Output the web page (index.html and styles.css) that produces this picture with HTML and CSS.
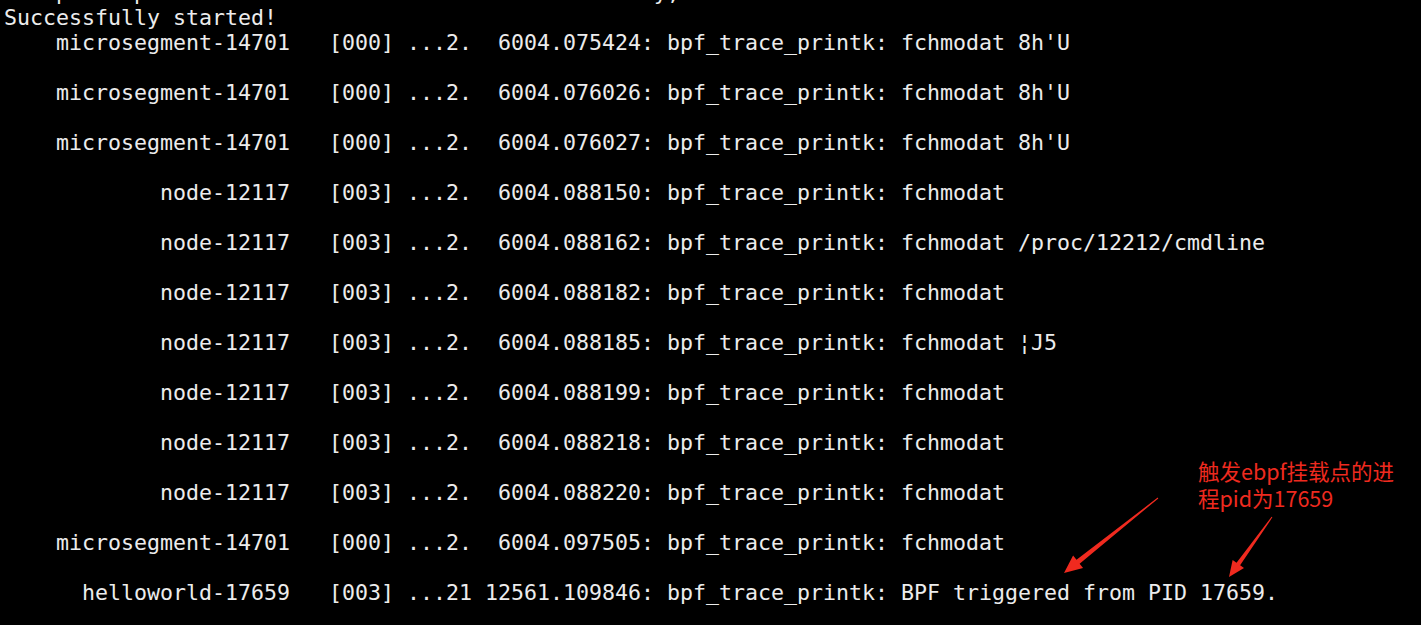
FILE: index.html
```html
<!DOCTYPE html>
<html lang="zh-CN">
<head>
<meta charset="utf-8">
<title>trace_pipe</title>
<link rel="stylesheet" href="styles.css">
</head>
<body>
<div class="screen">
<pre class="term">    path: printk: attach to tracefs then read it by,
Successfully started!
    microsegment-14701   [000] ...2.  6004.075424: bpf_trace_printk: fchmodat 8h'U

    microsegment-14701   [000] ...2.  6004.076026: bpf_trace_printk: fchmodat 8h'U

    microsegment-14701   [000] ...2.  6004.076027: bpf_trace_printk: fchmodat 8h'U

            node-12117   [003] ...2.  6004.088150: bpf_trace_printk: fchmodat

            node-12117   [003] ...2.  6004.088162: bpf_trace_printk: fchmodat /proc/12212/cmdline

            node-12117   [003] ...2.  6004.088182: bpf_trace_printk: fchmodat

            node-12117   [003] ...2.  6004.088185: bpf_trace_printk: fchmodat ¦J5

            node-12117   [003] ...2.  6004.088199: bpf_trace_printk: fchmodat

            node-12117   [003] ...2.  6004.088218: bpf_trace_printk: fchmodat

            node-12117   [003] ...2.  6004.088220: bpf_trace_printk: fchmodat

    microsegment-14701   [000] ...2.  6004.097505: bpf_trace_printk: fchmodat

      helloworld-17659   [003] ...21 12561.109846: bpf_trace_printk: BPF triggered from PID 17659.
</pre>
<div class="note"><span class="note-line">触发ebpf挂载点的进</span><span class="note-line">程pid为17659</span></div>
<svg class="arrows" width="1421" height="625" viewBox="0 0 1421 625">
  <polygon points="1157.69,497.61 1076.51,559.82 1073.08,555.52 1064,573 1083.06,568.02 1079.63,563.72 1158.31,498.39"/>
  <polygon points="1271.59,516.71 1236.53,562.72 1232.63,559.92 1229,577 1244.01,568.08 1240.11,565.28 1272.41,517.29"/>
</svg>
</div>
</body>
</html>
```
FILE: styles.css
```css
html, body {
  margin: 0;
  padding: 0;
  background: #000;
  overflow: hidden;
}
.screen {
  position: relative;
  width: 1421px;
  height: 625px;
  overflow: hidden;
  background: #000;
}
.term {
  margin: -20px 0 0 0;
  padding: 0 0 0 4px;
  font-family: "DejaVu Sans Mono", monospace;
  font-size: 21.6px;
  line-height: 25px;
  color: #ececec;
  white-space: pre;
}
.note {
  position: absolute;
  left: 1198px;
  top: 457px;
  display: flex;
  flex-direction: column;
  font-family: "Microsoft YaHei", "Noto Sans CJK SC", sans-serif;
  font-size: 21.5px;
  line-height: 27px;
  color: #ee2a1f;
}
.note-line {
  display: block;
  white-space: nowrap;
}
.arrows {
  position: absolute;
  left: 0;
  top: 0;
}
.arrows polygon {
  fill: #f02a1f;
}
```
